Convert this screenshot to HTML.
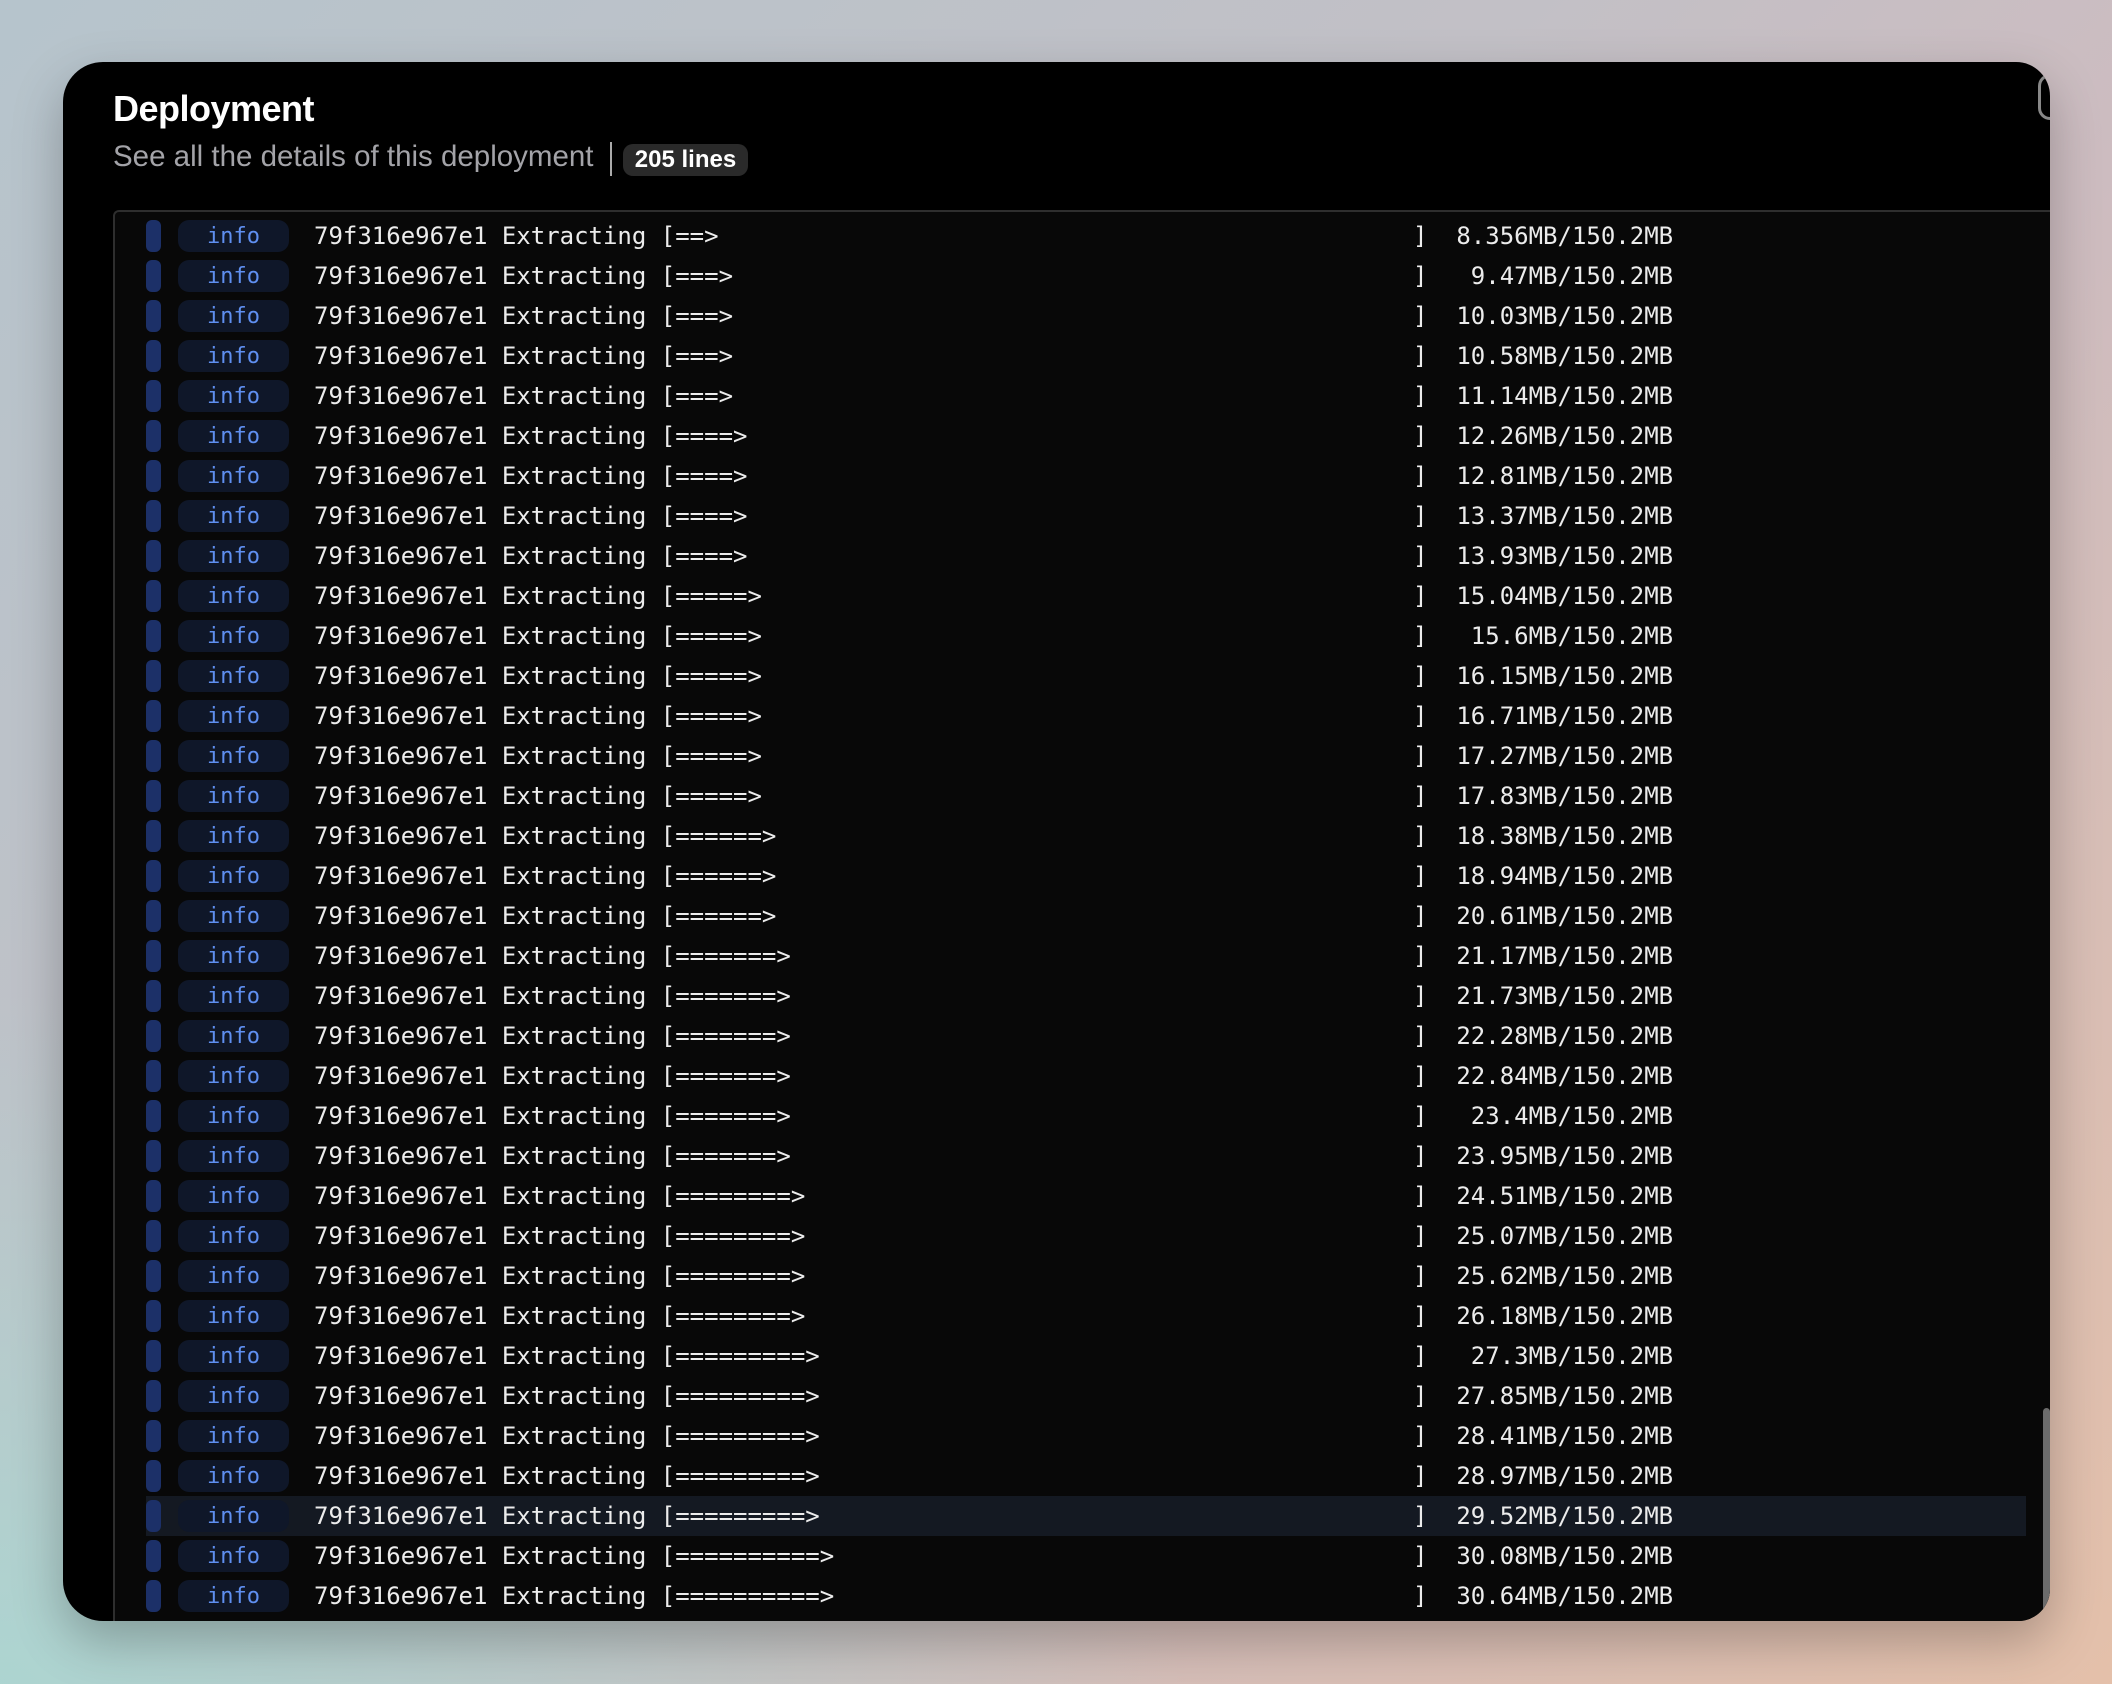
<!DOCTYPE html>
<html><head><meta charset="utf-8"><style>
html,body{margin:0;padding:0;width:2112px;height:1684px;overflow:hidden;}
body{background:linear-gradient(135deg,#b6c4cc 0%,#c2c0c6 40%,#cdbcc0 60%,#e4c0aa 100%);position:relative;font-family:"Liberation Sans",sans-serif;}
.bl{position:absolute;left:0;bottom:0;width:1200px;height:700px;background:radial-gradient(ellipse at 0% 100%,rgba(170,215,210,.9),rgba(170,215,210,0) 70%);}
.card{position:absolute;left:63px;top:62px;width:1987px;height:1559px;background:#000;border-radius:40px 34px 32px 40px;overflow:hidden;box-shadow:0 20px 50px rgba(0,0,0,.25);}
h1{position:absolute;left:50px;top:26px;margin:0;font-size:36px;font-weight:700;color:#fff;letter-spacing:-0.5px;}
.sub{position:absolute;left:50px;top:78px;font-size:29.5px;color:#a3a3a8;white-space:nowrap;}
.sep{position:absolute;left:547px;top:80px;width:2px;height:34px;background:#aaa;}
.badge{position:absolute;left:560px;top:82px;width:125px;height:32px;background:#2a2a2a;border-radius:10px;color:#fff;font-size:24px;font-weight:700;text-align:center;line-height:32px;}
.box{position:absolute;left:50px;top:148px;width:2000px;height:1500px;background:#080808;border-top:2px solid #2e2e2e;border-left:2px solid #2e2e2e;border-radius:6px 0 0 0;}
.row{position:absolute;left:0;width:2000px;height:40px;font-family:"DejaVu Sans Mono",monospace;font-size:24px;color:#ececec;}
.row.hl .hb{position:absolute;left:31px;top:0;width:1880px;height:40px;background:#141922;}
.bar{position:absolute;left:31px;top:4px;width:15px;height:32px;background:#1c3068;border-radius:6px;}
.tag{position:absolute;left:63px;top:4px;width:111px;height:32px;background:#0f1729;border-radius:11px;color:#5f8ff0;font-size:22px;text-align:center;line-height:34px;}
.t{position:absolute;left:199px;top:0;line-height:40px;white-space:pre;}
.r{position:absolute;left:1298px;top:0;line-height:40px;white-space:pre;}
.sb{position:absolute;left:1980px;top:1346px;width:7px;height:210px;background:#6b6b6b;border-radius:4px;}
.ring{position:absolute;left:1975px;top:12px;width:20px;height:40px;border:3px solid #888;border-right:none;border-radius:12px 0 0 12px;}
</style></head><body><div class="bl"></div>
<div class="card">
<h1>Deployment</h1>
<div class="sub">See all the details of this deployment</div>
<div class="sep"></div>
<div class="badge">205 lines</div>
<div class="ring"></div>
<div class="box" id="box"></div>
<div class="sb"></div>
</div>
<script>
var d=[[2,"8.356"],[3,"9.47"],[3,"10.03"],[3,"10.58"],[3,"11.14"],[4,"12.26"],[4,"12.81"],[4,"13.37"],[4,"13.93"],[5,"15.04"],[5,"15.6"],[5,"16.15"],[5,"16.71"],[5,"17.27"],[5,"17.83"],[6,"18.38"],[6,"18.94"],[6,"20.61"],[7,"21.17"],[7,"21.73"],[7,"22.28"],[7,"22.84"],[7,"23.4"],[7,"23.95"],[8,"24.51"],[8,"25.07"],[8,"25.62"],[8,"26.18"],[9,"27.3"],[9,"27.85"],[9,"28.41"],[9,"28.97"],[9,"29.52"],[10,"30.08"],[10,"30.64"]];
var h="";
for(var i=0;i<d.length;i++){
var s=(d[i][1]+"MB/150.2MB");while(s.length<15)s=" "+s;
h+='<div class="row'+(i==32?' hl':'')+'" style="top:'+(4+40*i)+'px">'+(i==32?'<div class="hb"></div>':'')+'<div class="bar"></div><div class="tag">info</div><div class="t">79f316e967e1 Extracting ['+"=".repeat(d[i][0])+'&gt;</div><div class="r">]  '+s+'</div></div>';
}
document.getElementById("box").innerHTML=h;
</script>
</body></html>
